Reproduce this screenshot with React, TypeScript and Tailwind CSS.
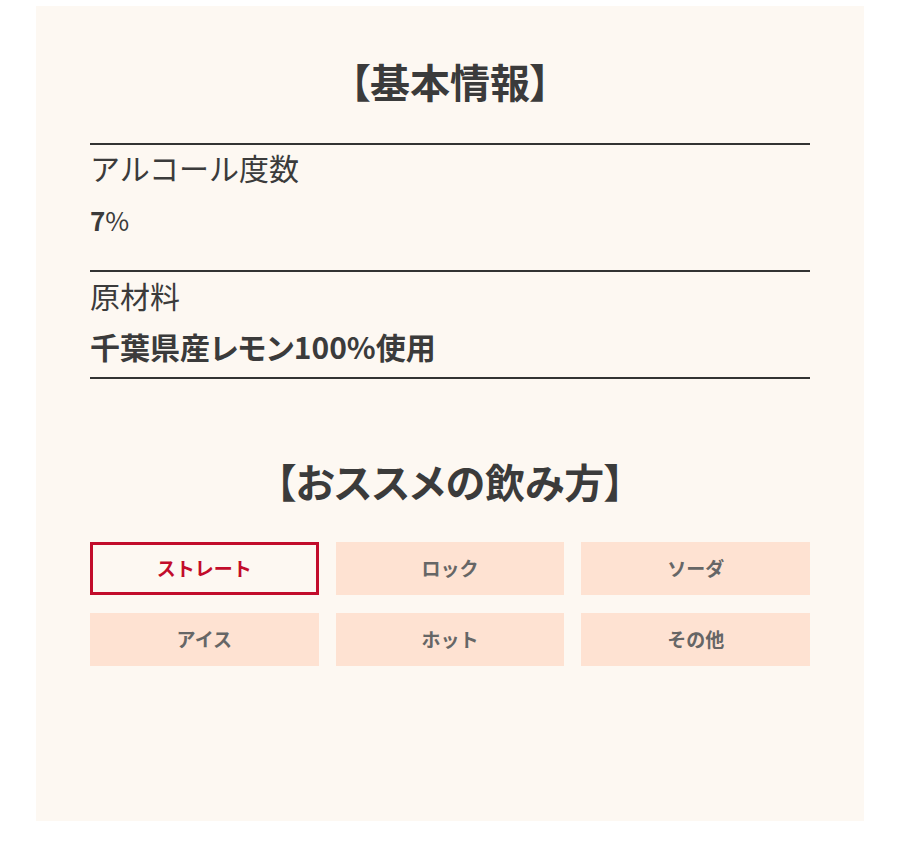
import React, { useState } from 'react';

const styles = ['ストレート', 'ロック', 'ソーダ', 'アイス', 'ホット', 'その他'];

const App = () => {
  const [active, setActive] = useState('ストレート');

  return (
    <div className="min-h-[842px] bg-white pt-[6px] font-['Noto_Sans_CJK_JP','Noto_Sans',sans-serif] text-[#3b3b3b]">
      <section className="mx-auto w-[828px] bg-[#fdf8f2] px-[54px] pt-[55px] pb-[155px]">
        {/* 基本情報 */}
        <h2 className="text-center text-[40px] font-bold leading-none [font-feature-settings:'palt']">【基本情報】</h2>

        <dl className="mt-[42px] border-b-2 border-[#333]">
          <div className="border-t-2 border-[#333] pt-[7px] pb-[37px]">
            <dt className="text-[30px] leading-none">アルコール度数</dt>
            <dd className="mt-[25px] text-[26px] leading-none">
              <span className="font-bold">7</span>%
            </dd>
          </div>
          <div className="border-t-2 border-[#333] pt-[8px] pb-[16px]">
            <dt className="text-[30px] leading-none">原材料</dt>
            <dd className="mt-[21px] text-[30px] font-bold leading-none [font-feature-settings:'palt']">千葉県産レモン100%使用</dd>
          </div>
        </dl>

        {/* おススメの飲み方 */}
        <h2 className="mt-[82px] text-center text-[40px] font-bold leading-none [font-feature-settings:'palt']">【おススメの飲み方】</h2>

        <ul className="mt-[41px] grid grid-cols-3 gap-x-[17px] gap-y-[18px]">
          {styles.map((s) => (
            <li key={s}>
              <button
                onClick={() => setActive(s)}
                className={
                  s === active
                    ? 'flex h-[53px] w-full items-center justify-center border-[3px] border-[#c20c2b] bg-[#fdf8f2] text-[19px] font-bold text-[#c20c2b]'
                    : 'flex h-[53px] w-full items-center justify-center bg-[#fee2d2] text-[19px] font-bold text-[#666]'
                }
              >
                {s}
              </button>
            </li>
          ))}
        </ul>
      </section>
    </div>
  );
};

export default App;
